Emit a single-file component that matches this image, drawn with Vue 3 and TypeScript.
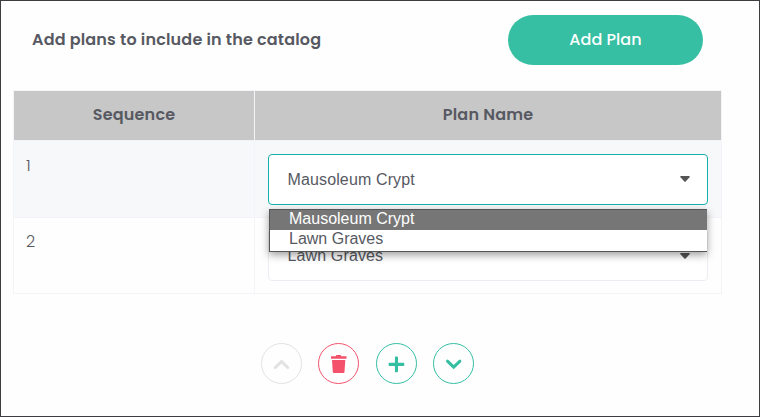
<script setup lang="ts">
import { ref } from 'vue'

interface PlanRow {
  sequence: number
  plan: string
  open: boolean
}

const options: string[] = ['Mausoleum Crypt', 'Lawn Graves']
const rows = ref<PlanRow[]>([
  { sequence: 1, plan: 'Mausoleum Crypt', open: true },
  { sequence: 2, plan: 'Lawn Graves', open: false },
])

function addPlan(): void {
  rows.value.push({ sequence: rows.value.length + 1, plan: options[0], open: false })
}

function choose(row: PlanRow, option: string): void {
  row.plan = option
  row.open = false
}
</script>

<template>
  <main class="panel">
    <header class="top">
      <h1 class="title">Add plans to include in the catalog</h1>
      <button class="add" type="button" @click="addPlan">Add Plan</button>
    </header>

    <section class="table">
      <div class="row head">
        <div class="cell seq">Sequence</div>
        <div class="cell name">Plan Name</div>
      </div>
      <div v-for="row in rows" :key="row.sequence" class="row body">
        <div class="cell seq">{{ row.sequence }}</div>
        <div class="cell name">
          <div class="select" :class="{ open: row.open }" @click="row.open = !row.open">
            <span class="value">{{ row.plan }}</span>
            <svg class="caret" width="10" height="6" viewBox="0 0 10 6"><path d="M.9 0h8.2q1.1.2.4 1.2L5.7 5.5q-.7.7-1.4 0L.5 1.2Q-.2.2.9 0Z" /></svg>
            <ul v-if="row.open" class="menu">
              <li
                v-for="option in options"
                :key="option"
                :class="{ active: option === row.plan }"
                @click.stop="choose(row, option)"
              >{{ option }}</li>
            </ul>
          </div>
        </div>
      </div>
    </section>

    <nav class="actions">
      <button class="round muted" type="button" disabled>
        <svg width="41" height="41" viewBox="0 0 41 41"><path class="line" d="m14.3 24.5 6.2-6 6.2 6" /></svg>
      </button>
      <button class="round danger" type="button">
        <svg width="41" height="41" viewBox="0 0 41 41"><path class="fill" d="M13 13.2h4.6l.8-1.2h4.2l.8 1.2h5.1v2.5H13ZM14 17h13.3l-.8 11.9q-.1 1.1-1.2 1.1H16q-1.1 0-1.2-1.1Z" /></svg>
      </button>
      <button class="round" type="button">
        <svg width="41" height="41" viewBox="0 0 41 41"><path class="fill" d="M19.8 13.5h1.3q.9 0 .9.9v5.4h5.4q.9 0 .9.9v1.3q0 .9-.9.9H22v5.4q0 .9-.9.9h-1.3q-.9 0-.9-.9v-5.4h-5.4q-.9 0-.9-.9v-1.3q0-.9.9-.9h5.4v-5.4q0-.9.9-.9Z" /></svg>
      </button>
      <button class="round" type="button">
        <svg width="41" height="41" viewBox="0 0 41 41"><path class="line" d="m14.5 18.2 6.2 6 6.2-6" /></svg>
      </button>
    </nav>
  </main>
</template>

<style>
body {
  margin: 0;
  background: #fff;
}
</style>

<style scoped>
.panel {
  box-sizing: border-box;
  width: 760px;
  height: 417px;
  padding: 14px 37px 0 12px;
  border: 1px solid #3c3c41;
  background: #fefefe;
  color: #575962;
  font-family: Poppins, Inter, sans-serif;
  font-size: 16px;
  overflow: hidden;
}
.top {
  display: flex;
  align-items: center;
  justify-content: space-between;
  height: 50px;
  padding: 0 19px;
}
.title {
  margin: 0;
  font-size: 16px;
  line-height: 24px;
  font-weight: 600;
  letter-spacing: 0.18px;
  white-space: nowrap;
}
.add {
  width: 195px;
  height: 50px;
  padding: 0;
  border: 0;
  border-radius: 25px;
  background: #36bfa3;
  color: #fff;
  font: 500 16px/24px Poppins, Inter, sans-serif;
  letter-spacing: 0.04px;
}
.table {
  box-sizing: border-box;
  width: 709px;
  margin-top: 25px;
  border: 1px solid #f3f4f8;
}
.row {
  display: flex;
}
.cell {
  box-sizing: border-box;
}
.seq {
  width: 241px;
  border-right: 1px solid #f3f4f8;
}
.name {
  flex: 1;
}
.head {
  background: #c7c7c7;
  font-weight: 600;
  letter-spacing: 0.2px;
}
.head .cell {
  height: 49px;
  line-height: 48px;
  text-align: center;
}
.body {
  height: 77px;
  box-sizing: border-box;
  border-top: 1px solid #f3f4f8;
}
.body:nth-child(even) {
  background: #f6f8fa;
}
.body:last-child {
  height: 76px;
}
.body .seq {
  padding: 13px 12px 0;
  font-weight: 300;
  line-height: 24px;
}
.body:last-child .seq {
  padding-top: 12px;
}
.body .name {
  padding: 13px 13px 0;
}
.body:last-child .name {
  padding-top: 12px;
}
.select {
  position: relative;
  box-sizing: border-box;
  display: flex;
  align-items: center;
  justify-content: space-between;
  width: 440px;
  height: 51px;
  padding: 0 17px 0 18.5px;
  border: 1px solid #ebedf2;
  border-radius: 4px;
  background: #fff;
  color: #575962;
  font-family: "Liberation Sans", Arial, sans-serif;
  letter-spacing: 0.13px;
}
.select.open {
  border-color: #16b0aa;
}
.value {
  line-height: 20px;
}
.caret {
  margin-top: 0;
  fill: #555;
}
.open .caret {
  margin-top: -2px;
}
.menu {
  position: absolute;
  z-index: 1;
  top: 54px;
  left: 0;
  box-sizing: border-box;
  width: 438px;
  height: 43px;
  margin: 0;
  padding: 0;
  border: 1px solid #555;
  border-right-width: 0;
  background: #fff;
  box-shadow: 0 3px 8px rgba(0, 0, 0, 0.38);
  letter-spacing: 0;
  list-style: none;
}
.menu li {
  height: 20px;
  padding-left: 19px;
  line-height: 17px;
}
.menu .active {
  background: #767676;
  color: #fff;
}
.actions {
  display: flex;
  gap: 16.33px;
  margin: 49px 0 0 248px;
}
.round {
  box-sizing: border-box;
  width: 41px;
  height: 41px;
  padding: 0;
  border: 1px solid currentColor;
  border-radius: 50%;
  background: transparent;
  color: #34bfa3;
}
.round svg {
  display: block;
  margin: -1px;
}
.muted {
  color: #e2e2e2;
}
.danger {
  color: #f4516c;
}
.fill {
  fill: currentColor;
}
.line {
  fill: none;
  stroke: currentColor;
  stroke-width: 3;
  stroke-linecap: round;
}
</style>
